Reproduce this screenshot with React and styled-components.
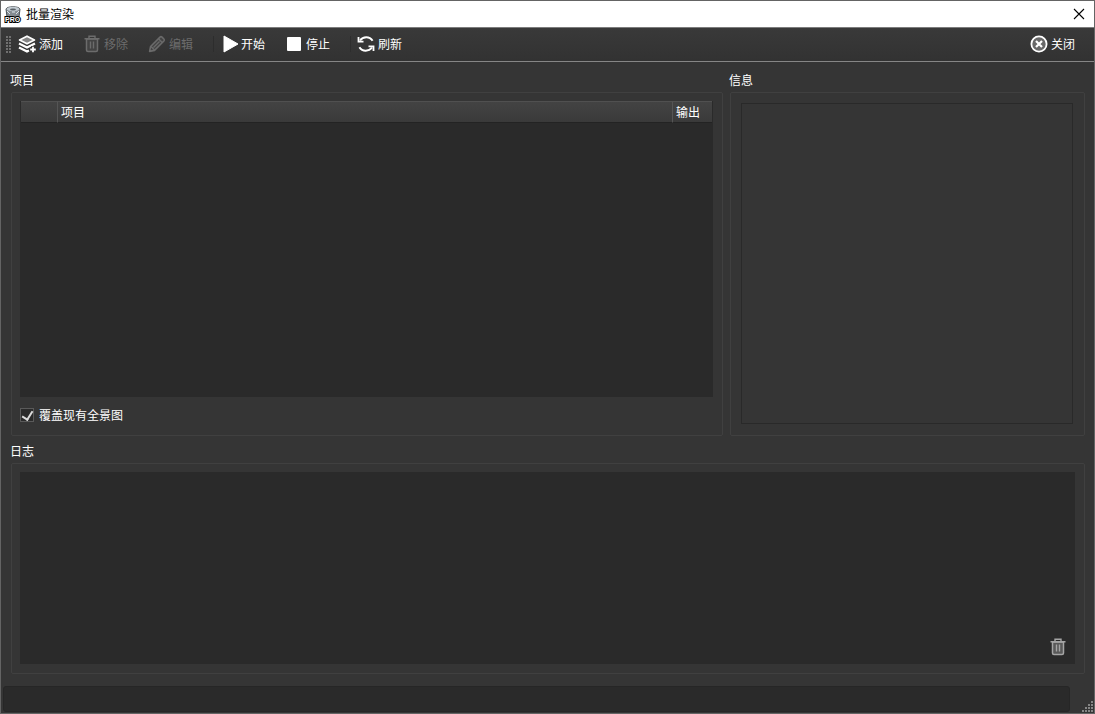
import React, { useState } from "react";
import styled, { createGlobalStyle } from "styled-components";

const GlobalStyle = createGlobalStyle`
  * {
    box-sizing: border-box;
  }

  body {
    margin: 0;
    background: #353535;
    color: #ffffff;
    font-family: "Noto Sans CJK SC", sans-serif;
    font-size: 12px;
    line-height: 16px;
  }

  button {
    padding: 0;
    border: 0;
    background: none;
    color: inherit;
    font: inherit;
  }
`;

const Window = styled.div`
  display: flex;
  flex-direction: column;
  min-height: 100vh;
  border: 1px solid #646464;
`;

const TitleBar = styled.header`
  display: flex;
  align-items: center;
  height: 27px;
  padding: 0 9px 1px 3px;
  border-bottom: 1px solid #7c7c7c;
  background: #ffffff;
  color: #000000;
`;

const Title = styled.h1`
  flex: 1;
  margin: 0 0 0 4px;
  font-size: 12px;
  font-weight: 400;
`;

const CloseWindow = styled.button`
  display: flex;
`;

const Toolbar = styled.div`
  display: flex;
  align-items: center;
  height: 34px;
  padding: 0 19px 1px 5px;
  border-bottom: 1px solid #868686;
  background: linear-gradient(#393939, #323232);
`;

const ToolGroup = styled.div`
  display: flex;
  gap: 20px;
  margin-left: ${props => (props.$end ? "auto" : "6px")};
`;

const Separator = styled.div`
  width: 1px;
  height: 16px;
  margin-left: 20px;
  background: #2d2d2d;
`;

const ToolButton = styled.button`
  display: flex;
  align-items: center;
  gap: 3px;

  &:disabled {
    color: #6c6c6c;
  }
`;

const Content = styled.main`
  display: flex;
  flex: 1;
  flex-direction: column;
  gap: 7px;
  padding: 10px 9px 12px 10px;
`;

const Columns = styled.div`
  display: grid;
  flex: 364 1 0;
  grid-template-columns: minmax(0, 1fr) 355px;
  gap: 7px;
`;

const Section = styled.section`
  display: flex;
  flex: ${props => props.$grow || 1} 1 0;
  flex-direction: column;
  gap: 4px;
`;

const SectionTitle = styled.h2`
  margin: 0 0 0 -1px;
  font-size: 12px;
  font-weight: 400;
`;

const Frame = styled.div`
  display: flex;
  flex: 1;
  flex-direction: column;
  padding: ${props => props.$padding};
  border: 1px solid #404040;
  border-radius: 2px;
`;

const TableArea = styled.div`
  flex: 1;
  padding: 0 1px;
  background: #2a2a2a;
`;

const Table = styled.table`
  width: 100%;
  border-spacing: 0;
  table-layout: fixed;
`;

const HeadCell = styled.th`
  width: ${props => props.$width};
  height: 22px;
  padding: 0 0 1px 3px;
  border-top: 1px solid #505050;
  border-right: ${props => (props.$last ? "0" : "1px solid #555555")};
  border-bottom: 1px solid #232323;
  background: linear-gradient(#434343, #3a3a3a);
  font-weight: 400;
  text-align: left;
  white-space: nowrap;
`;

const CheckRow = styled.label`
  display: flex;
  align-items: center;
  gap: 5px;
  margin-top: 10px;
`;

const Checkbox = styled.input`
  display: grid;
  place-items: center;
  width: 14px;
  height: 14px;
  margin: 0;
  border: 1px solid #5a5a5a;
  background: #2b2b2b;
  appearance: none;

  &:checked::before {
    content: "";
    width: 5px;
    height: 9px;
    margin-top: -2px;
    border: solid #dcdcdc;
    border-width: 0 2px 2px 0;
    transform: rotate(32deg);
  }
`;

const InfoBox = styled.div`
  flex: 1;
  border: 1px solid #292929;
`;

const LogBox = styled.div`
  display: flex;
  flex: 1;
  align-items: flex-end;
  justify-content: flex-end;
  padding: 8px;
  background: #2a2a2a;
`;

const ClearButton = styled.button`
  display: flex;
  color: #a5a5a5;
`;

const StatusBar = styled.footer`
  display: flex;
  align-items: flex-end;
  gap: 12px;
  padding: 0 1px 1px 2px;
`;

const Status = styled.div`
  flex: 1;
  height: 26px;
  border: 1px solid #262626;
  border-radius: 3px;
  background: #2a2a2a;
`;

function LogoIcon() {
  return (
    <svg width="18" height="18" viewBox="0 0 18 18" aria-hidden="true">
      <path d="M2 4C3 1 15 1 16 4L15 12H3Z" fill="#858c92" stroke="#4e5357" />
      <ellipse cx="9" cy="4" rx="6.5" ry="2.2" fill="#c2cbd2" />
      <ellipse cx="9" cy="4.4" rx="3" ry="1" fill="#596066" />
      <path d="M3 6L6 9M15 6L12 9M8 7H11" stroke="#dce4ea" />
      <text
        x="1"
        y="17"
        fill="#ffffff"
        stroke="#000000"
        strokeWidth="2"
        paintOrder="stroke"
        fontFamily="Liberation Sans"
        fontSize="7"
        fontWeight="700"
      >
        PRO
      </text>
    </svg>
  );
}

function CrossIcon() {
  return (
    <svg width="12" height="12" viewBox="0 0 12 12" aria-hidden="true">
      <path d="M1 1L11 11M11 1L1 11" stroke="#000000" strokeWidth="1.1" />
    </svg>
  );
}

function HandleIcon() {
  const rows = [0, 3, 6, 9, 12, 15];

  return (
    <svg width="6" height="17" viewBox="0 0 6 17" aria-hidden="true">
      {rows.map(y => (
        <path key={y} d={`M0 ${y}h2v2h-2zM3 ${y}h2v2h-2z`} fill="#707070" />
      ))}
    </svg>
  );
}

function AddIcon() {
  return (
    <svg width="18" height="18" viewBox="0 0 18 18" aria-hidden="true">
      <path
        d="M9 1.2L16.4 5L9 8.8L1.6 5Z"
        fill="#858585"
        stroke="#ffffff"
        strokeWidth="1.8"
        strokeLinejoin="round"
      />
      <path
        d="M1 8.6L9 12.6L17 8.6M1 12.6L9 16.6L11 15.6"
        fill="none"
        stroke="#ffffff"
        strokeWidth="2.2"
      />
      <path d="M15 11V18M11.5 14.5H18" stroke="#363636" strokeWidth="3.6" />
      <path d="M15 11.7V17.3M12.2 14.5H17.8" stroke="#ffffff" strokeWidth="1.8" />
    </svg>
  );
}

function TrashIcon({ fill }) {
  return (
    <svg width="18" height="18" viewBox="0 0 18 18" aria-hidden="true">
      <path
        d="M3.5 4H14.5V15Q14.5 16.5 13 16.5H5Q3.5 16.5 3.5 15Z"
        fill={fill}
        stroke="currentColor"
        strokeWidth="1.5"
      />
      <path
        d="M1.5 3.8H16.5M6 3V1.2H12V3M7.5 6.5V13.5M10.5 6.5V13.5"
        fill="none"
        stroke="currentColor"
        strokeWidth="1.4"
      />
    </svg>
  );
}

function EditIcon() {
  return (
    <svg width="18" height="18" viewBox="0 0 18 18" aria-hidden="true">
      <path
        d="M1.6 16.4L2.6 11.5L12 2.1Q13 1.2 14 2.1L15.9 4Q16.8 5 15.9 6L6.5 15.4Z"
        fill="#434343"
        stroke="#6a6a6a"
        strokeWidth="1.6"
        strokeLinejoin="round"
      />
      <path
        d="M10.5 3.8L14.2 7.5M3 11.5L6.5 15M5.5 12.5L11.5 6.5"
        stroke="#6a6a6a"
        strokeWidth="1.4"
      />
    </svg>
  );
}

function PlayIcon() {
  return (
    <svg width="18" height="18" viewBox="0 0 18 18" aria-hidden="true">
      <path d="M4 1L18 9L4 17Z" fill="#ffffff" stroke="#ffffff" strokeLinejoin="round" />
    </svg>
  );
}

function StopIcon() {
  return (
    <svg width="18" height="18" viewBox="0 0 18 18" aria-hidden="true">
      <rect x="2" y="2" width="14" height="14" rx="1" fill="#ffffff" />
    </svg>
  );
}

function RefreshIcon() {
  return (
    <svg width="18" height="18" viewBox="0 0 18 18" aria-hidden="true">
      <path
        d="M3 5.5C6 1.4 12.5 1 15.6 5.8M15 12.5C12 16.6 5.5 17 2.4 12.2"
        fill="none"
        stroke="#ffffff"
        strokeWidth="2"
      />
      <path
        d="M1.5 2V6.7H6.5M16.5 16V11.3H11.5"
        fill="none"
        stroke="#ffffff"
        strokeWidth="1.8"
      />
    </svg>
  );
}

function CloseIcon() {
  return (
    <svg width="18" height="18" viewBox="0 0 18 18" aria-hidden="true">
      <circle cx="9" cy="9" r="7.6" fill="#686868" stroke="#ffffff" strokeWidth="1.8" />
      <path d="M6 6L12 12M12 6L6 12" stroke="#ffffff" strokeWidth="2.2" />
    </svg>
  );
}

function GripIcon() {
  const dots = [
    [9, 0],
    [6, 3], [9, 3],
    [3, 6], [6, 6], [9, 6],
    [0, 9], [3, 9], [6, 9], [9, 9]
  ];

  return (
    <svg width="11" height="11" viewBox="0 0 11 11" aria-hidden="true">
      {dots.map(([x, y]) => (
        <rect key={`${x}-${y}`} x={x} y={y} width="2" height="2" fill="#858585" />
      ))}
    </svg>
  );
}

export default function App() {
  const [overwrite, setOverwrite] = useState(true);

  return (
    <>
      <GlobalStyle />
      <Window>
        <TitleBar>
          <LogoIcon />
          <Title>批量渲染</Title>
          <CloseWindow aria-label="关闭窗口">
            <CrossIcon />
          </CloseWindow>
        </TitleBar>
        <Toolbar>
          <HandleIcon />
          <ToolGroup>
            <ToolButton>
              <AddIcon />
              添加
            </ToolButton>
            <ToolButton disabled>
              <TrashIcon fill="#434343" />
              移除
            </ToolButton>
            <ToolButton disabled>
              <EditIcon />
              编辑
            </ToolButton>
          </ToolGroup>
          <Separator />
          <ToolGroup>
            <ToolButton>
              <PlayIcon />
              开始
            </ToolButton>
            <ToolButton>
              <StopIcon />
              停止
            </ToolButton>
          </ToolGroup>
          <Separator />
          <ToolGroup>
            <ToolButton>
              <RefreshIcon />
              刷新
            </ToolButton>
          </ToolGroup>
          <ToolGroup $end>
            <ToolButton>
              <CloseIcon />
              关闭
            </ToolButton>
          </ToolGroup>
        </Toolbar>
        <Content>
          <Columns>
            <Section>
              <SectionTitle>项目</SectionTitle>
              <Frame $padding="8px 9px 12px 8px">
                <TableArea>
                  <Table>
                    <thead>
                      <tr>
                        <HeadCell $width="37px" aria-label="状态" />
                        <HeadCell>项目</HeadCell>
                        <HeadCell $width="39px" $last>
                          输出
                        </HeadCell>
                      </tr>
                    </thead>
                  </Table>
                </TableArea>
                <CheckRow>
                  <Checkbox
                    type="checkbox"
                    checked={overwrite}
                    onChange={e => setOverwrite(e.target.checked)}
                  />
                  覆盖现有全景图
                </CheckRow>
              </Frame>
            </Section>
            <Section>
              <SectionTitle>信息</SectionTitle>
              <Frame $padding="10px 11px 11px 10px">
                <InfoBox />
              </Frame>
            </Section>
          </Columns>
          <Section $grow={231}>
            <SectionTitle>日志</SectionTitle>
            <Frame $padding="8px 9px 9px 8px">
              <LogBox>
                <ClearButton aria-label="清除日志">
                  <TrashIcon fill="#595959" />
                </ClearButton>
              </LogBox>
            </Frame>
          </Section>
        </Content>
        <StatusBar>
          <Status role="status" />
          <GripIcon />
        </StatusBar>
      </Window>
    </>
  );
}
